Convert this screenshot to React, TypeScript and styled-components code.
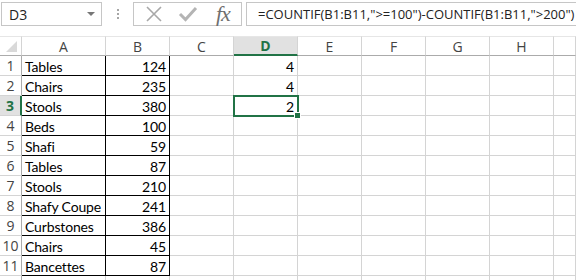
import React from 'react';
import styled, { createGlobalStyle, css } from 'styled-components';

const GlobalStyle = createGlobalStyle`
  html, body {
    margin: 0;
    padding: 0;
    background: #ffffff;
    overflow: hidden;
  }
`;

const Page = styled.div`
  width: 576px;
  height: 280px;
  overflow: hidden;
  font-family: 'Open Sans', 'Noto Sans', sans-serif;
`;

const Toolbar = styled.div`
  display: flex;
  align-items: flex-start;
  height: 36px;
  padding: 2px 0 0 1px;
  box-sizing: border-box;
`;

const NameBox = styled.div`
  width: 101px;
  height: 24px;
  box-sizing: border-box;
  border: 1px solid #c6c6c6;
  display: flex;
  align-items: center;
  justify-content: space-between;
  padding: 0 6px 0 7px;
  font-size: 14px;
  color: #222;
`;

const Caret = styled.span`
  width: 0;
  height: 0;
  border-left: 4px solid transparent;
  border-right: 4px solid transparent;
  border-top: 4px solid #777;
`;

const Grip = styled.div`
  width: 31px;
  height: 24px;
  display: flex;
  flex-direction: column;
  align-items: center;
  justify-content: center;
  gap: 2px;
`;

const Dot = styled.span`
  width: 2px;
  height: 2px;
  background: #a6a6a6;
`;

const IconBox = styled.div`
  width: 109px;
  height: 24px;
  box-sizing: border-box;
  border: 1px solid #c6c6c6;
  display: flex;
  align-items: center;
  padding: 0 0 0 10px;
  gap: 14px;
`;

const Fx = styled.span`
  font-family: 'Liberation Serif', serif;
  font-style: italic;
  font-size: 22px;
  color: #6f6f6f;
  letter-spacing: -1px;
  margin-left: 4px;
  line-height: 1;
`;

const FormulaBox = styled.div`
  flex: 1;
  margin-left: 4px;
  height: 24px;
  box-sizing: border-box;
  border: 1px solid #c6c6c6;
  border-right: none;
  display: flex;
  align-items: center;
  padding-left: 11px;
  font-size: 13px;
  color: #222;
  white-space: nowrap;
  overflow: hidden;
`;

const Sheet = styled.div`
  display: grid;
  grid-template-columns: 22px 84px repeat(7, 64px) 22px;
  grid-auto-rows: 20px;
  position: relative;
`;

const HeadCell = styled.div<{ $active?: boolean }>`
  box-sizing: border-box;
  border-right: 1px solid #d4d4d4;
  border-bottom: 1px solid #ababab;
  border-top: 1px solid #e6e6e6;
  display: flex;
  align-items: center;
  justify-content: center;
  font-size: 14px;
  color: #444;
  ${(p) =>
    p.$active &&
    css`
      background: #e1e1e1;
      color: #217346;
      font-weight: 700;
      border-bottom: 2px solid #217346;
    `}
`;

const Corner = styled(HeadCell)`
  align-items: flex-end;
  justify-content: flex-end;
  padding: 0 4px 3px 0;
`;

const Triangle = styled.span`
  width: 0;
  height: 0;
  border-left: 11px solid transparent;
  border-bottom: 11px solid #d9d9d9;
`;

const RowHead = styled.div<{ $active?: boolean }>`
  box-sizing: border-box;
  border-bottom: 1px solid #d4d4d4;
  border-right: 1px solid #ababab;
  display: flex;
  align-items: center;
  justify-content: center;
  font-size: 14px;
  color: #444;
  ${(p) =>
    p.$active &&
    css`
      background: #e1e1e1;
      color: #217346;
      font-weight: 700;
      border-right: 2px solid #217346;
    `}
`;

const Cell = styled.div<{ $num?: boolean; $boxed?: boolean }>`
  box-sizing: border-box;
  border-right: 1px solid #d4d4d4;
  border-bottom: 1px solid #d4d4d4;
  font-family: Lato, 'Open Sans', sans-serif;
  font-size: 14px;
  letter-spacing: -0.15px;
  color: #000;
  display: flex;
  align-items: center;
  padding: 1px 3px 0;
  white-space: nowrap;
  overflow: hidden;
  justify-content: ${(p) => (p.$num ? 'flex-end' : 'flex-start')};
  ${(p) =>
    p.$boxed &&
    css`
      border-right-color: #000;
      border-bottom-color: #000;
    `}
`;

const Selection = styled.div`
  position: absolute;
  left: 233px;
  top: 59px;
  width: 66px;
  height: 22px;
  box-sizing: border-box;
  border: 2px solid #217346;
  pointer-events: none;
`;

const Handle = styled.span`
  position: absolute;
  right: -4px;
  bottom: -4px;
  width: 5px;
  height: 5px;
  background: #217346;
  border: 1px solid #fff;
`;

// column I is cut off at the window edge, so its letter isn't visible
const columns = ['A', 'B', 'C', 'D', 'E', 'F', 'G', 'H', ''];

const rows: [string, number][] = [
  ['Tables', 124],
  ['Chairs', 235],
  ['Stools', 380],
  ['Beds', 100],
  ['Shafi', 59],
  ['Tables', 87],
  ['Stools', 210],
  ['Shafy Coupe', 241],
  ['Curbstones', 386],
  ['Chairs', 45],
  ['Bancettes', 87],
];

const dValues: Record<number, number> = { 0: 4, 1: 4, 2: 2 };

const CrossIcon = () => (
  <svg width="20" height="20" viewBox="0 0 20 20">
    <path d="M3 3 L17 17 M17 3 L3 17" stroke="#a8a8a8" strokeWidth="1.6" fill="none" />
  </svg>
);

const CheckIcon = () => (
  <svg width="20" height="20" viewBox="0 0 20 20">
    <path d="M2 10 L7.5 15.5 L18 4" stroke="#b4b4b4" strokeWidth="3" fill="none" />
  </svg>
);

const App: React.FC = () => {
  return (
    <Page>
      <GlobalStyle />
      <Toolbar>
        <NameBox>
          D3
          <Caret />
        </NameBox>
        <Grip>
          <Dot />
          <Dot />
          <Dot />
        </Grip>
        <IconBox>
          <CrossIcon />
          <CheckIcon />
          <Fx>fx</Fx>
        </IconBox>
        <FormulaBox>=COUNTIF(B1:B11,"&gt;=100")-COUNTIF(B1:B11,"&gt;200")</FormulaBox>
      </Toolbar>
      <Sheet>
        <Corner>
          <Triangle />
        </Corner>
        {columns.map((c, i) => (
          <HeadCell key={i} $active={c === 'D'}>
            {c}
          </HeadCell>
        ))}
        {[...rows, null].map((row, i) => (
          <React.Fragment key={i}>
            <RowHead $active={i === 2}>{row ? i + 1 : ''}</RowHead>
            <Cell $boxed={!!row}>{row ? row[0] : ''}</Cell>
            <Cell $boxed={!!row} $num>
              {row ? row[1] : ''}
            </Cell>
            <Cell />
            <Cell $num>{dValues[i] ?? ''}</Cell>
            <Cell />
            <Cell />
            <Cell />
            <Cell />
            <Cell />
          </React.Fragment>
        ))}
        <Selection>
          <Handle />
        </Selection>
      </Sheet>
    </Page>
  );
};

export default App;
